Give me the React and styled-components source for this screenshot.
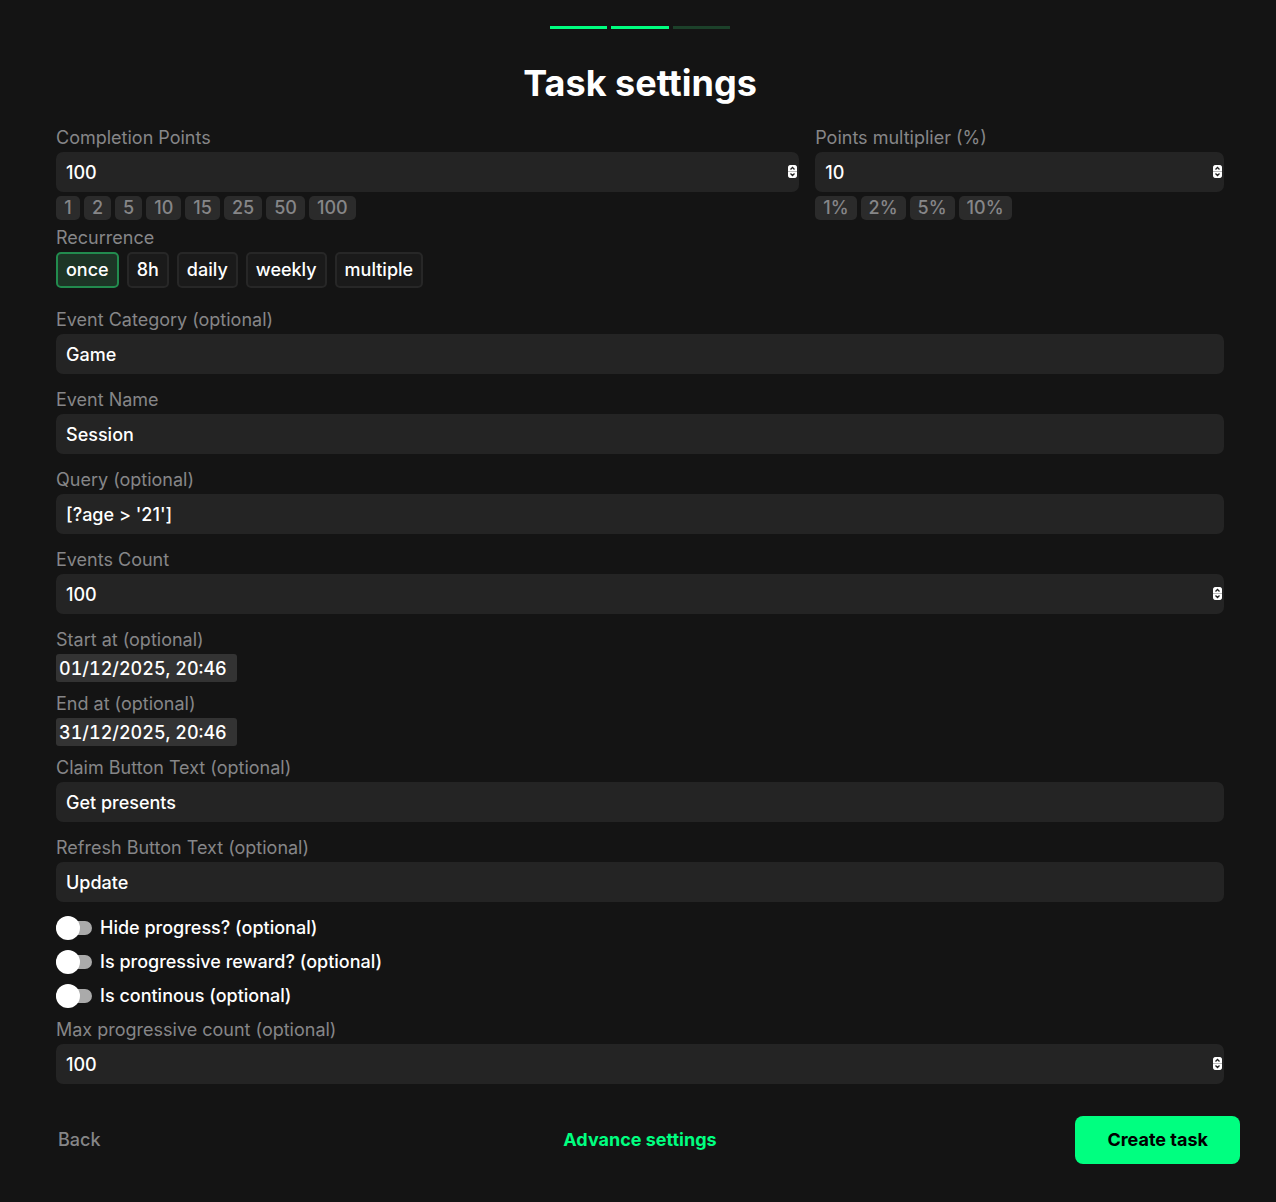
import React, { useState } from "react";
import styled, { createGlobalStyle } from "styled-components";

const POINTS = [1, 2, 5, 10, 15, 25, 50, 100];
const MULTIPLIERS = [1, 2, 5, 10];
const RECURRENCES = ["once", "8h", "daily", "weekly", "multiple"];

function TextField({ id, label, initial }) {
  const [value, setValue] = useState(initial);

  return (
    <Field>
      <Label htmlFor={id}>{label}</Label>
      <Input
        id={id}
        type="text"
        value={value}
        onChange={(e) => setValue(e.target.value)}
      />
    </Field>
  );
}

function DateField({ id, label, initial }) {
  const [value, setValue] = useState(initial);

  return (
    <Field>
      <Label htmlFor={id}>{label}</Label>
      <DateInput
        id={id}
        type="text"
        value={value}
        onChange={(e) => setValue(e.target.value)}
      />
    </Field>
  );
}

function NumberField({ id, label, value, onChange, children }) {
  return (
    <Field>
      <Label htmlFor={id}>{label}</Label>
      <NumberBox>
        <Input
          id={id}
          type="number"
          value={value}
          onChange={(e) => onChange(Number(e.target.value))}
        />
        <Stepper>
          <Step
            type="button"
            aria-label="Increase"
            onClick={() => onChange(value + 1)}
          >
            <svg width="9" height="6" viewBox="0 0 9 6" fill="none">
              <path d="M2.5 4.5 4.5 2.5l2 2" stroke="#222" strokeWidth="1.3" />
            </svg>
          </Step>
          <Step
            type="button"
            aria-label="Decrease"
            onClick={() => onChange(value - 1)}
          >
            <svg width="9" height="6" viewBox="0 0 9 6" fill="none">
              <path d="M2.5 1.5l2 2 2-2" stroke="#222" strokeWidth="1.3" />
            </svg>
          </Step>
        </Stepper>
      </NumberBox>
      {children}
    </Field>
  );
}

function Toggle({ id, label }) {
  const [checked, setChecked] = useState(false);

  return (
    <ToggleRow htmlFor={id}>
      <Switch
        id={id}
        type="checkbox"
        checked={checked}
        onChange={(e) => setChecked(e.target.checked)}
      />
      {label}
    </ToggleRow>
  );
}

function App() {
  const [points, setPoints] = useState(100);
  const [multiplier, setMultiplier] = useState(10);
  const [recurrence, setRecurrence] = useState("once");
  const [eventsCount, setEventsCount] = useState(100);
  const [maxCount, setMaxCount] = useState(100);

  return (
    <Page>
      <GlobalStyle />
      <Progress>
        <Segment $done />
        <Segment $done />
        <Segment />
      </Progress>
      <Title>Task settings</Title>

      <Form onSubmit={(e) => e.preventDefault()}>
        <Body>
          <PointsRow>
            <NumberField
              id="points"
              label="Completion Points"
              value={points}
              onChange={setPoints}
            >
              <Chips>
                {POINTS.map((n) => (
                  <Chip key={n} type="button" onClick={() => setPoints(n)}>
                    {n}
                  </Chip>
                ))}
              </Chips>
            </NumberField>
            <NumberField
              id="multiplier"
              label="Points multiplier (%)"
              value={multiplier}
              onChange={setMultiplier}
            >
              <Chips>
                {MULTIPLIERS.map((n) => (
                  <Chip key={n} type="button" onClick={() => setMultiplier(n)}>
                    {`${n}%`}
                  </Chip>
                ))}
              </Chips>
            </NumberField>
          </PointsRow>

          <RecurrenceGroup role="group" aria-labelledby="recurrence">
            <Label as="span" id="recurrence">
              Recurrence
            </Label>
            <Options>
              {RECURRENCES.map((name) => (
                <Option
                  key={name}
                  type="button"
                  $active={recurrence === name}
                  onClick={() => setRecurrence(name)}
                >
                  {name}
                </Option>
              ))}
            </Options>
          </RecurrenceGroup>

          <Stack $gap={12}>
            <TextField
              id="category"
              label="Event Category (optional)"
              initial="Game"
            />
            <TextField id="event" label="Event Name" initial="Session" />
            <TextField
              id="query"
              label="Query (optional)"
              initial="[?age > '21']"
            />
            <NumberField
              id="events-count"
              label="Events Count"
              value={eventsCount}
              onChange={setEventsCount}
            />
            <Stack $gap={8}>
              <DateField
                id="start"
                label="Start at (optional)"
                initial="01/12/2025, 20:46"
              />
              <DateField
                id="end"
                label="End at (optional)"
                initial="31/12/2025, 20:46"
              />
              <TextField
                id="claim"
                label="Claim Button Text (optional)"
                initial="Get presents"
              />
            </Stack>
            <TextField
              id="refresh"
              label="Refresh Button Text (optional)"
              initial="Update"
            />
          </Stack>

          <Toggles>
            <Toggle id="hide-progress" label="Hide progress? (optional)" />
            <Toggle id="progressive" label="Is progressive reward? (optional)" />
            <Toggle id="continous" label="Is continous (optional)" />
          </Toggles>

          <NumberField
            id="max-count"
            label="Max progressive count (optional)"
            value={maxCount}
            onChange={setMaxCount}
          />
        </Body>

        <Footer>
          <BackButton type="button">Back</BackButton>
          <AdvanceButton type="button">Advance settings</AdvanceButton>
          <CreateButton type="submit">Create task</CreateButton>
        </Footer>
      </Form>
    </Page>
  );
}

const GlobalStyle = createGlobalStyle`
  *, *::before, *::after {
    box-sizing: border-box;
  }

  body {
    margin: 0;
    background: #141414;
    color: #fff;
    font-family: Inter, sans-serif;
    font-size: 18px;
    font-weight: 500;
    line-height: 24px;
  }

  button, input {
    margin: 0;
    border: none;
    font: inherit;
    color: inherit;
  }

  button {
    padding: 0;
    background: none;
    cursor: pointer;
  }
`;

const Page = styled.main`
  padding: 26px 36px 38px 40px;
`;

const Progress = styled.div`
  display: flex;
  gap: 4px;
  width: 180px;
  margin: 0 auto;
`;

const Segment = styled.div`
  flex: 1;
  height: 3px;
  background: ${({ $done }) => ($done ? "#00ff80" : "#1c412a")};
`;

const Title = styled.h1`
  margin: 30px 0 17px;
  font-size: 36px;
  font-weight: 700;
  line-height: 48px;
  text-align: center;
`;

const Form = styled.form`
  display: flex;
  flex-direction: column;
  gap: 32px;
`;

const Body = styled.div`
  padding: 0 16px;
`;

const PointsRow = styled.div`
  display: grid;
  grid-template-columns: 20fr 11fr;
  gap: 16px;
`;

const Field = styled.div`
  display: flex;
  flex-direction: column;
`;

const Label = styled.label`
  color: #868688;
  font-weight: 400;
  line-height: 28px;
`;

const Input = styled.input`
  width: 100%;
  height: 40px;
  padding: 0 10px;
  border-radius: 7px;
  background: #242424;
  outline: none;
  appearance: textfield;

  &::-webkit-inner-spin-button {
    appearance: none;
    margin: 0;
  }
`;

const DateInput = styled.input`
  width: 181px;
  height: 28px;
  padding: 0 3px;
  border-radius: 3px;
  background: #333;
  outline: none;
  font-variant-numeric: tabular-nums;
`;

const NumberBox = styled.div`
  position: relative;
`;

const Stepper = styled.div`
  position: absolute;
  top: 13px;
  right: 2px;
  display: grid;
  gap: 1px;
  border-radius: 3px;
  background: #bbb;
  overflow: hidden;
`;

const Step = styled.button`
  display: block;
  width: 9px;
  height: 6px;
  background: #fff;

  svg {
    display: block;
  }
`;

const Chips = styled.div`
  display: flex;
  flex-wrap: wrap;
  gap: 4px;
  margin-top: 4px;
`;

const Chip = styled.button`
  min-width: 24px;
  height: 24px;
  padding: 0 8px;
  border-radius: 5px;
  background: #2b2b2b;
  color: #868688;
`;

const RecurrenceGroup = styled.div`
  display: flex;
  flex-direction: column;
  margin: 4px 0 18px;
`;

const Options = styled.div`
  display: flex;
  flex-wrap: wrap;
  gap: 8px;
`;

const Option = styled.button`
  height: 36px;
  padding: 0 8px;
  border: 2px solid ${({ $active }) => ($active ? "#228b4e" : "#272727")};
  border-radius: 5px;
  background: ${({ $active }) => ($active ? "#1d3526" : "#1a1a1a")};
`;

const Stack = styled.div`
  display: flex;
  flex-direction: column;
  gap: ${({ $gap }) => $gap}px;
`;

const Toggles = styled.div`
  display: flex;
  flex-direction: column;
  align-items: flex-start;
  gap: 10px;
  margin: 14px 0 8px;
`;

const ToggleRow = styled.label`
  display: flex;
  align-items: center;
  gap: 8px;
  cursor: pointer;
`;

const Switch = styled.input`
  appearance: none;
  display: flex;
  align-items: center;
  width: 36px;
  height: 24px;
  cursor: pointer;

  &::before {
    content: "";
    flex-shrink: 0;
    width: 36px;
    height: 14px;
    border-radius: 7px;
    background: ${({ checked }) => (checked ? "#228b4e" : "#aaa")};
  }

  &::after {
    content: "";
    flex-shrink: 0;
    width: 24px;
    height: 24px;
    margin-left: ${({ checked }) => (checked ? "-24px" : "-36px")};
    border-radius: 50%;
    background: #fff;
  }
`;

const Footer = styled.div`
  display: grid;
  grid-template-columns: 1fr auto 1fr;
  align-items: center;
`;

const BackButton = styled.button`
  justify-self: start;
  padding: 0 18px;
  color: #868688;
`;

const AdvanceButton = styled.button`
  color: #00ff80;
  font-weight: 700;
`;

const CreateButton = styled.button`
  justify-self: end;
  height: 48px;
  padding: 0 32px;
  border-radius: 8px;
  background: #00ff80;
  color: #000;
  font-weight: 700;
`;

export default App;
